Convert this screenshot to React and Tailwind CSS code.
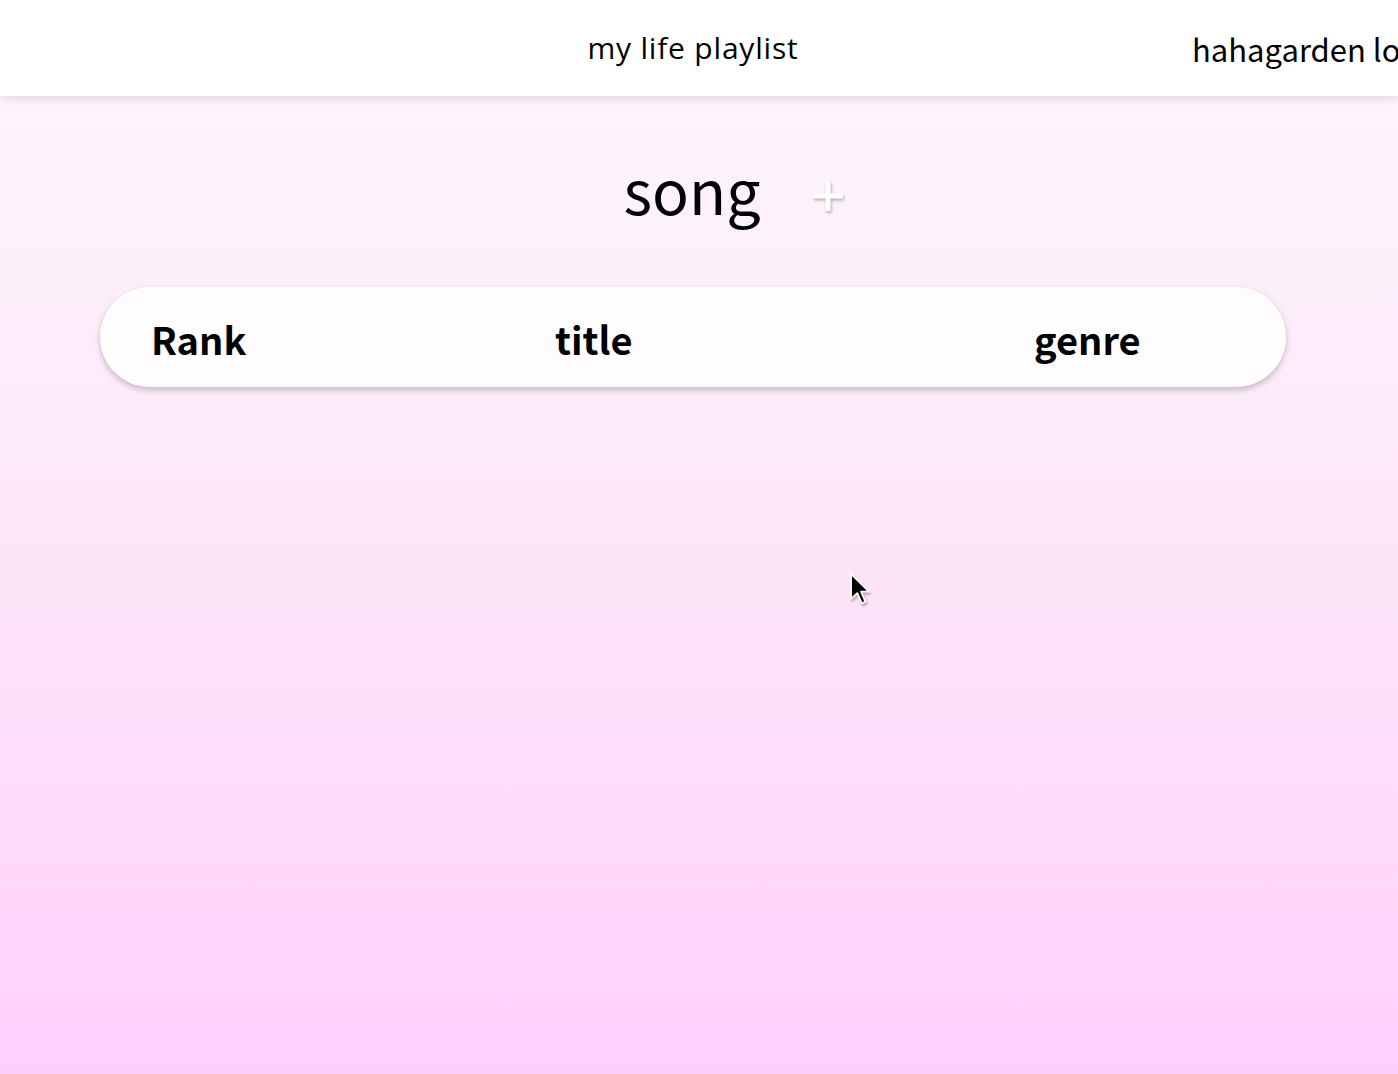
import React from 'react';

const songs = [];

function Cursor() {
  return (
    <svg className="absolute left-[848px] top-[572px] w-[24px] h-[34px] drop-shadow-[1px_2px_1px_rgba(0,0,0,0.3)]" viewBox="0 0 12 19">
      <path d="M1 1 L1 15 L4.5 11.8 L7 17.5 L9 16.6 L6.6 11 L11 11 Z" fill="#000" stroke="#fff" strokeWidth="1" strokeLinejoin="round" />
    </svg>
  );
}

function PlusIcon() {
  return (
    <svg className="w-[36px] h-[36px] drop-shadow-[1px_2px_1.5px_rgba(0,0,0,0.28)]" viewBox="0 0 36 36">
      <path d="M18 3 V33 M3 18 H33" stroke="#fff" strokeWidth="5" strokeLinecap="butt" />
    </svg>
  );
}

export default function App() {
  return (
    <div className="relative min-h-[1074px] w-full overflow-hidden bg-gradient-to-b from-[#fdf9fc] via-[#fce6f8] to-[#ffcffc] font-['Noto_Sans_CJK_KR','Noto_Sans',sans-serif] text-black">
      {/* header */}
      <header className="relative z-10 h-[96px] w-full bg-white shadow-[0_2px_10px_rgba(0,0,0,0.14)]">
        <div className="h-full w-[1386px] flex items-center">
          <div className="flex-1" />
          <h1 className="font-['Open_Sans','Noto_Sans',sans-serif] text-[30px] tracking-[0.8px] leading-none -mt-[1px]">my life playlist</h1>
          <div className="flex-1 flex justify-end min-w-0">
            <div className="w-[194px] shrink-0 whitespace-nowrap text-[31px] leading-none">
              hahagarden logout
            </div>
          </div>
        </div>
      </header>

      <main className="w-[1386px] flex flex-col items-center">
        <div className="relative mt-[62px] flex items-center">
          <h2 className="text-[61px] leading-none -ml-[2px]">song</h2>
          <div className="absolute left-[calc(100%+49px)] top-[20px]">
            <PlusIcon />
          </div>
        </div>

        <div className="mt-[68px] w-[1186px] h-[100px] rounded-full bg-[#fffcfe] shadow-[0_3px_6px_rgba(0,0,0,0.22)] flex items-center text-[38px] font-bold leading-none">
          <div className="pl-[51px] w-[455px] mt-[3px]">Rank</div>
          <div className="w-[479px] mt-[3px]">title</div>
          <div className="mt-[3px]">genre</div>
        </div>

        <ul className="w-[1186px]">
          {songs.map((s) => (
            <li key={s.id}>{s.title}</li>
          ))}
        </ul>
      </main>

      <Cursor />
    </div>
  );
}
